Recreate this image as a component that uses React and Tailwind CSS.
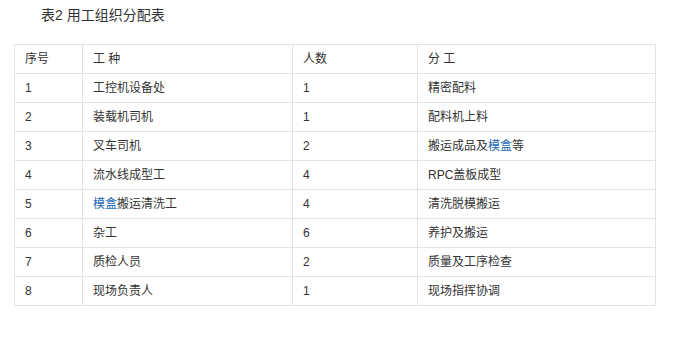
import React from 'react';

const rows = [
  ['1', '工控机设备处', '1', '精密配料'],
  ['2', '装载机司机', '1', '配料机上料'],
  ['3', '叉车司机', '2', <>搬运成品及<a className="text-[#1a67b5]">模盒</a>等</>],
  ['4', '流水线成型工', '4', 'RPC盖板成型'],
  ['5', <><a className="text-[#1a67b5]">模盒</a>搬运清洗工</>, '4', '清洗脱模搬运'],
  ['6', '杂工', '6', '养护及搬运'],
  ['7', '质检人员', '2', '质量及工序检查'],
  ['8', '现场负责人', '1', '现场指挥协调'],
];

const font = { fontFamily: 'Arial, "Liberation Sans", "Noto Sans CJK SC", sans-serif' };

export default function App() {
  return (
    <div className="w-[688px] h-[342px] bg-white text-[#333]" style={font}>
      <p className="pl-[41px] pt-[7px] text-[14px] leading-[17px]">表2 用工组织分配表</p>
      <table className="ml-[14px] mt-[20px] w-[642px] border-collapse text-[12px]">
        <colgroup>
          <col className="w-[68px]" />
          <col className="w-[210px]" />
          <col className="w-[125px]" />
          <col />
        </colgroup>
        <thead>
          <tr className="h-[29px]">
            {['序号', '工 种', '人数', '分 工'].map((h) => (
              <th key={h} className="border border-[#e3e3e3] pl-[10px] text-left font-normal">
                {h}
              </th>
            ))}
          </tr>
        </thead>
        <tbody>
          {rows.map((r, i) => (
            <tr key={i} className="h-[29px]">
              {r.map((c, j) => (
                <td key={j} className="border border-[#e3e3e3] pl-[10px]">
                  {c}
                </td>
              ))}
            </tr>
          ))}
        </tbody>
      </table>
    </div>
  );
}
